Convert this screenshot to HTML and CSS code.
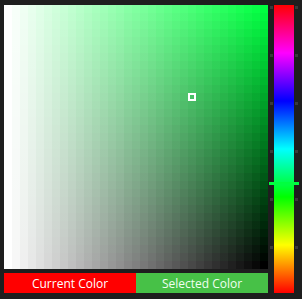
FILE: index.html
```html
<!DOCTYPE html>
<html lang="en">
<head>
    <meta charset="UTF-8">
    <title>Color Picker</title>
    <link rel="stylesheet" href="styles.css">
</head>
<body>
    <div class="picker">
        <div class="left">
            <div class="sv-square">
                <div class="sv-black" id="svBlack"></div>
                <div class="sv-white" id="svWhite"></div>
                <div class="sv-cursor"></div>
            </div>
            <div class="swatches">
                <div class="swatch current">Current Color</div>
                <div class="swatch selected">Selected Color</div>
            </div>
        </div>
        <div class="hue-track">
            <div class="hue-bar"></div>
            <span class="tick l" style="top: 1px"></span>
            <span class="tick l" style="top: 49px"></span>
            <span class="tick l" style="top: 97px"></span>
            <span class="tick l" style="top: 145px"></span>
            <span class="tick l" style="top: 193px"></span>
            <span class="tick l" style="top: 241px"></span>
            <span class="tick r" style="top: 1px"></span>
            <span class="tick r" style="top: 49px"></span>
            <span class="tick r" style="top: 97px"></span>
            <span class="tick r" style="top: 145px"></span>
            <span class="tick r" style="top: 193px"></span>
            <span class="tick r" style="top: 241px"></span>
            <div class="hue-marker" style="top: 177px"></div>
        </div>
    </div>

    <script>
        // stepped gradients, 8px cells like the original control
        function steps(dir, rgb, reverse) {
            const n = 33;
            const stops = [];
            for (let i = 0; i < n; i++) {
                let a = i / (n - 1);
                if (reverse) a = 1 - a;
                const c = 'rgba(' + rgb + ',' + a.toFixed(3) + ')';
                stops.push(c + ' ' + (i * 8) + 'px', c + ' ' + (i * 8 + 8) + 'px');
            }
            return 'linear-gradient(' + dir + ',' + stops.join(',') + ')';
        }
        document.getElementById('svWhite').style.background = steps('to right', '255,255,255', true);
        document.getElementById('svBlack').style.background = steps('to bottom', '0,0,0', false);
    </script>
</body>
</html>
```

FILE: styles.css
```css
body {
    margin: 0;
    background: #1e1e1e;
    font-family: "Open Sans", "Noto Sans", sans-serif;
}
.picker {
    display: flex;
    padding: 5px 0 0 4px;
    gap: 1px;
}
.left {
    display: flex;
    flex-direction: column;
    gap: 4px;
}
.sv-square {
    position: relative;
    width: 264px;
    height: 264px;
    background: #00ff40;
}
.sv-black {
    position: absolute;
    inset: 0;
    background: linear-gradient(to bottom, rgba(0, 0, 0, 0), #000);
}
.sv-white {
    position: absolute;
    inset: 0;
    background: linear-gradient(to right, #fff, rgba(255, 255, 255, 0));
}
.sv-cursor {
    position: absolute;
    left: 184px;
    top: 88px;
    width: 4px;
    height: 4px;
    border: 2px solid #fff;
}
.swatches {
    display: flex;
    height: 20px;
}
.swatch {
    flex: 1;
    display: flex;
    align-items: center;
    justify-content: center;
    font-size: 12px;
    color: #fff;
}
.swatch.current {
    background: #ff0000;
}
.swatch.selected {
    background: #47c147;
    color: #f0fff0;
}
.hue-track {
    position: relative;
    width: 30px;
    height: 288px;
}
.hue-bar {
    margin-left: 5px;
    width: 20px;
    height: 288px;
    background: linear-gradient(to bottom, #f00, #f0f, #00f, #0ff, #0f0, #ff0, #f00);
}
.tick {
    position: absolute;
    width: 3px;
    height: 3px;
    background: #3a3a3a;
}
.tick.l {
    left: 1px;
}
.tick.r {
    left: 26px;
}
.hue-marker {
    position: absolute;
    left: 0;
    width: 30px;
    height: 3px;
    background: #00ff40;
}
```
